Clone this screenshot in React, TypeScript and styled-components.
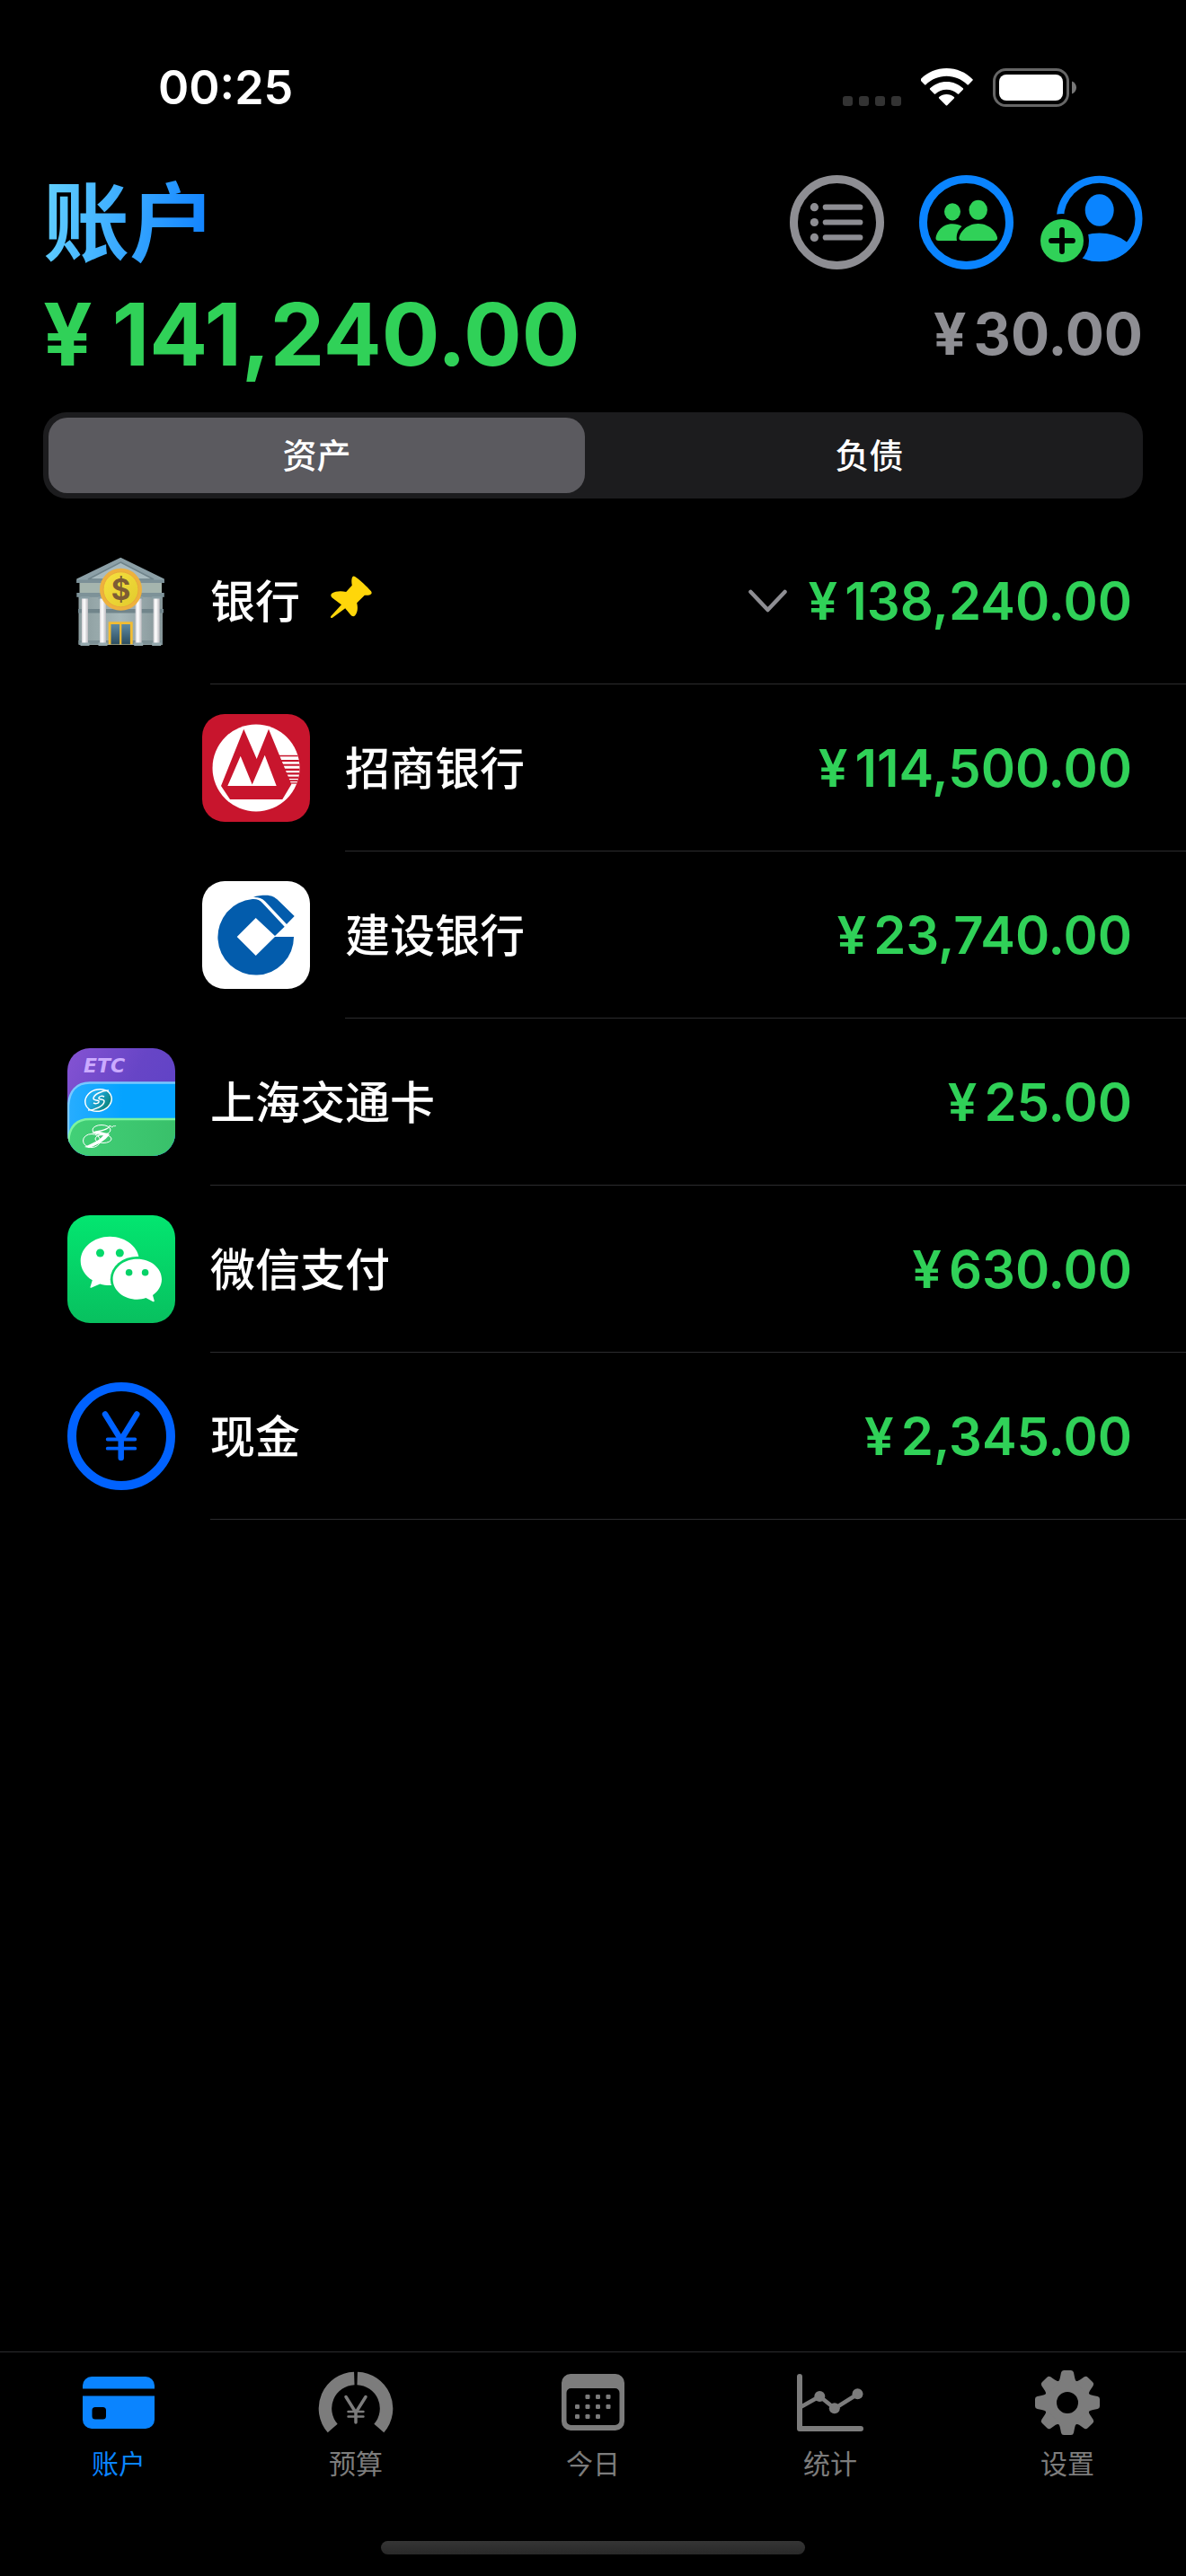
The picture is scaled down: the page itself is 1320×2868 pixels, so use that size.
import React, { useState } from 'react';
import styled, { createGlobalStyle, css } from 'styled-components';

const color = {
  green: '#30d158',
  blue: '#0a84ff',
  grey: '#8e8e93',
  tab: '#7c7c7c',
  line: '#2c2c2e',
};

const GlobalStyle = createGlobalStyle`
  *, *::before, *::after { box-sizing: border-box; }
  body {
    margin: 0;
    background: #000;
    color: #fff;
    font-family: Inter, "Noto Sans CJK SC", sans-serif;
  }
  button {
    margin: 0;
    padding: 0;
    border: 0;
    background: none;
    color: inherit;
    font: inherit;
    cursor: pointer;
  }
  svg { display: block; flex: none; }
`;

const Screen = styled.div`
  display: flex;
  flex-direction: column;
  min-height: 100vh;
`;

const StatusBar = styled.div`
  display: flex;
  align-items: center;
  justify-content: space-between;
  height: 195px;
  padding: 0 121px 0 176px;
`;

const Clock = styled.time`
  font-size: 52px;
  line-height: 64px;
  font-weight: 600;
`;

const StatusIcons = styled.div`
  display: flex;
  align-items: flex-end;
  gap: 22px;
`;

const Header = styled.header`
  padding: 0 48px;
`;

const TitleRow = styled.div`
  display: flex;
  align-items: center;
  justify-content: space-between;
  height: 105px;
`;

const Title = styled.h1`
  margin: 0;
  font-size: 96px;
  line-height: 104px;
  font-weight: 700;
  background: linear-gradient(100deg, #64d2ff 0%, #0a7cff 100%);
  background-clip: text;
  -webkit-background-clip: text;
  color: transparent;
`;

const Actions = styled.div`
  display: flex;
  gap: 39px;
`;

const IconButton = styled.button`
  display: block;
`;

const LastAction = styled(IconButton)`
  margin-left: -9px;
`;

const Totals = styled.div`
  display: flex;
  align-items: center;
  justify-content: space-between;
  height: 144px;
`;

const Money = styled.span<{ $size: number; $weight: number; $tone: string; $gap: number }>`
  display: inline-flex;
  align-items: baseline;
  gap: ${(p) => p.$gap}px;
  font-size: ${(p) => p.$size}px;
  line-height: 1;
  font-weight: ${(p) => p.$weight};
  color: ${(p) => p.$tone};
`;

const Segments = styled.div`
  display: grid;
  grid-template-columns: 1fr 1fr;
  gap: 18px;
  height: 96px;
  margin-top: 15px;
  padding: 6px;
  border-radius: 26px;
  background: #1c1c1e;
`;

const Segment = styled.button<{ $active: boolean }>`
  border-radius: 21px;
  font-size: 38px;
  line-height: 48px;
  font-weight: 500;
  ${(p) => p.$active && css`background: #5b5a5f;`}
`;

const AccountList = styled.ul`
  flex: 1;
  margin: 21px 0 0;
  padding: 0;
  list-style: none;
`;

const AccountRow = styled.li<{ $nested: boolean }>`
  display: flex;
  gap: 39px;
  height: 186px;
  padding-left: ${(p) => (p.$nested ? 225 : 75)}px;
`;

const IconCell = styled.div`
  display: flex;
  align-items: center;
`;

const RowBody = styled.div`
  flex: 1;
  display: flex;
  align-items: center;
  gap: 24px;
  padding-right: 60px;
  border-bottom: 1px solid ${color.line};
`;

const AccountName = styled.span`
  display: flex;
  align-items: center;
  gap: 34px;
  margin-right: auto;
  padding-top: 2px;
  font-size: 50px;
  line-height: 60px;
  font-weight: 500;
`;

const PinMark = styled.span`
  padding-bottom: 10px;
`;

const TabBar = styled.nav`
  display: grid;
  grid-template-columns: repeat(5, 1fr);
  height: 211px;
  padding-top: 18px;
  border-top: 1px solid ${color.line};
`;

const Tab = styled.button<{ $active: boolean }>`
  display: flex;
  flex-direction: column;
  align-items: center;
  justify-content: flex-start;
  gap: 10px;
  font-size: 30px;
  line-height: 40px;
  font-weight: 400;
  color: ${(p) => (p.$active ? color.blue : color.tab)};
`;

const HomeIndicator = styled.div`
  width: 472px;
  height: 15px;
  margin: 0 auto 24px;
  border-radius: 8px;
  background: linear-gradient(#353535, #292929);
`;

const SignalDots = () => (
  <svg width="65" height="12" viewBox="0 0 65 12" fill="#333" aria-hidden="true">
    {[0, 18, 36, 54].map((x) => (
      <rect key={x} x={x} y="0" width="11" height="11" rx="3" />
    ))}
  </svg>
);

const WifiIcon = () => (
  <svg width="58" height="43" viewBox="0 0 58 43" fill="#fff" aria-hidden="true">
    <path d="M28.5 0C39.5 0 49.8 4.300 57.500 12.200c.4.400.4 1 0 1.400l-4.600 4.700c-.4.400-1 .4-1.400 0C45.300 12.200 37.200 8.800 28.500 8.800S11.700 12.200 5.500 18.300c-.4.400-1 .4-1.400 0L-.4 13.600c-.4-.4-.4-1 0-1.400C7.200 4.300 17.500 0 28.500 0Z" />
    <path d="M28.500 15c7 0 13.400 2.700 18.400 7.300.4.400.4 1 0 1.400l-4.700 4.700c-.4.400-1 .4-1.400 0-3.300-3-7.600-4.700-12.300-4.700s-9 1.700-12.300 4.700c-.4.400-1 .4-1.400 0l-4.700-4.700c-.4-.4-.4-1 0-1.400C15.100 17.700 21.500 15 28.500 15Z" />
    <path d="M28.500 29c3.200 0 6.100 1.100 8.400 3 .4.300.4 1 0 1.400l-7.700 7.900c-.4.400-1 .4-1.400 0l-7.700-7.900c-.4-.4-.4-1.100 0-1.400 2.300-1.900 5.200-3 8.400-3Z" />
  </svg>
);

const BatteryIcon = () => (
  <svg width="94" height="43" viewBox="0 0 94 43" aria-hidden="true">
    <rect x="1.500" y="1.500" width="82" height="40" rx="13" fill="none" stroke="#666" strokeWidth="3" />
    <rect x="7" y="7" width="71" height="29" rx="8" fill="#fff" />
    <path d="M88 14.500c3 1 5 3.700 5 7s-2 6-5 7Z" fill="#777" />
  </svg>
);

const ListIcon = () => (
  <svg width="105" height="105" viewBox="0 0 105 105" fill={color.grey} aria-hidden="true">
    <circle cx="52.500" cy="52.500" r="48" fill="none" stroke={color.grey} strokeWidth="9" />
    {[35.700, 52.500, 69.400].map((y) => (
      <g key={y}>
        <circle cx="27.400" cy={y} r="4.600" />
        <rect x="36.700" y={y - 3.100} width="44.700" height="6.200" rx="3.100" />
      </g>
    ))}
  </svg>
);

const PeopleIcon = () => (
  <svg width="105" height="105" viewBox="0 0 105 105" fill={color.green} aria-hidden="true">
    <circle cx="52.500" cy="52.500" r="48" fill="none" stroke={color.blue} strokeWidth="9" />
    <ellipse cx="37" cy="40.800" rx="9" ry="9.600" />
    <ellipse cx="65.700" cy="38.700" rx="10.200" ry="11" />
    <path d="M21.500 73c-3 0-3.600-2-2.500-5.500C21.500 59.500 28.500 54.300 37 54.300c4.200 0 7.800 1 10.500 2.700C42.800 61 40.800 67 42 73Z" />
    <path d="M48 73c-3.200 0-4.200-1.800-3.200-4.800C47.500 60 56 54 65.700 54s18.300 6 21 14.200c1 3 0 4.800-3.200 4.800Z" />
  </svg>
);

const AddPersonIcon = () => (
  <svg width="114" height="105" viewBox="0 0 114 105" aria-hidden="true">
    <defs>
      <mask id="badge-cut">
        <rect width="114" height="105" fill="#fff" />
        <circle cx="24" cy="73" r="30" fill="#000" />
      </mask>
      <clipPath id="person-clip">
        <circle cx="65.700" cy="48.500" r="47.500" />
      </clipPath>
    </defs>
    <g mask="url(#badge-cut)" fill={color.blue}>
      <circle cx="65.700" cy="48.500" r="43.800" fill="none" stroke={color.blue} strokeWidth="8" />
      <ellipse cx="65.700" cy="39" rx="16" ry="17.800" />
      <ellipse cx="65.700" cy="95.500" rx="41" ry="31" clipPath="url(#person-clip)" />
    </g>
    <circle cx="24" cy="73" r="24" fill={color.green} />
    <path d="M24 61v24M12 73h24" stroke="#000" strokeWidth="5.800" strokeLinecap="round" />
  </svg>
);

const BankIcon = () => (
  <svg width="120" height="120" viewBox="0 0 120 120" role="img" aria-label="银行">
    <defs>
      <linearGradient id="wall" x1="0" x2="1" y1="0" y2="0">
        <stop offset="0" stopColor="#8b9c9e" />
        <stop offset="0.500" stopColor="#a7b8ba" />
        <stop offset="1" stopColor="#859598" />
      </linearGradient>
      <linearGradient id="column" x1="0" x2="1" y1="0" y2="0">
        <stop offset="0" stopColor="#d4d2d6" />
        <stop offset="0.400" stopColor="#fff" />
        <stop offset="1" stopColor="#bcbbc0" />
      </linearGradient>
      <linearGradient id="glass" x1="0" x2="0" y1="0" y2="1">
        <stop offset="0" stopColor="#5f8aa3" />
        <stop offset="1" stopColor="#2b4c5e" />
      </linearGradient>
      <linearGradient id="coin" x1="0" x2="1" y1="0" y2="1">
        <stop offset="0" stopColor="#f6e13f" />
        <stop offset="1" stopColor="#e2ca2c" />
      </linearGradient>
    </defs>
    <rect x="12.500" y="54" width="93.500" height="55" fill="url(#wall)" />
    <rect x="12" y="69" width="95" height="4.500" fill="#71858b" />
    <rect x="12.500" y="104" width="93.500" height="4" fill="#7c8f94" />
    <rect x="13.500" y="39" width="91.500" height="13" fill="#a5b5ae" />
    <rect x="10.300" y="51" width="97.500" height="4.800" fill="#7d9298" />
    <path d="M59.300 11.700 107.800 35.500v4.500H10.300v-4.500Z" fill="#8ca0a7" />
    <path d="M59.300 17 96 36H23Z" fill="#a9bbbf" stroke="#6f848b" strokeWidth="1.500" />
    <rect x="10.300" y="36.500" width="97.500" height="3.500" fill="#7b9097" />
    {[16, 36, 75.700, 95.700].map((x) => (
      <g key={x}>
        <rect x={x - 1.500} y="55" width="10" height="3" fill="#899ea4" />
        <rect x={x} y="57.500" width="7" height="49.500" fill="url(#column)" />
        <rect x={x - 1.500} y="106.500" width="10" height="3.500" fill="#94a8ad" />
      </g>
    ))}
    <rect x="45.700" y="83.300" width="27" height="25" fill="#f3bd31" />
    <rect x="48.500" y="86" width="9.600" height="22.300" fill="url(#glass)" />
    <rect x="60.300" y="86" width="9.600" height="22.300" fill="url(#glass)" />
    <circle cx="59.500" cy="47.300" r="23.500" fill="#eeb13d" />
    <circle cx="59.500" cy="47.300" r="19.500" fill="url(#coin)" stroke="#e8a93a" strokeWidth="1" />
    <text x="59.500" y="59" textAnchor="middle" fontFamily="Inter, sans-serif" fontWeight="700" fontSize="33" fill="#7d5c35">$</text>
  </svg>
);

const PinIcon = () => (
  <svg width="46" height="47" viewBox="0 0 46 47" fill="#ffd60a" role="img" aria-label="置顶">
    <path d="M27.500 1.200C33 5 40 11.500 44.800 17c2.800 3.600-1.800 5.200-7 4.800l-8.600 8.400c1.500 6 .6 11.200-2 14-1.600 1.700-3.400 1.200-5-.7l-6-7.300L2 46.800c-1.300.9-2.600-.5-1.700-1.800L12 32.200 2 24.700c-2-1.700-2.400-3.600-.4-5.100 4-2.800 10.500-3 15.600-1.600l6.600-7.300c-.8-3.700-.6-7.700.4-9.300.7-1.200 2-1.200 3.300-.2Z" />
  </svg>
);

const CmbIcon = () => (
  <svg width="120" height="120" viewBox="0 0 120 120" role="img" aria-label="招商银行">
    <defs>
      <clipPath id="cmb-disc">
        <circle cx="60" cy="60" r="48.500" />
      </clipPath>
    </defs>
    <rect width="120" height="120" rx="25" fill="#c8152d" />
    <circle cx="60" cy="60" r="48.500" fill="#fff" />
    <g clipPath="url(#cmb-disc)" fill="#c8152d">
      <rect x="85" y="45.800" width="26" height="1.500" />
      <rect x="85" y="51" width="26" height="2" />
      <rect x="85" y="55.700" width="26" height="2" />
      <rect x="85" y="60.700" width="26" height="2.300" />
      <rect x="85" y="65.200" width="26" height="2.300" />
      <rect x="85" y="69.600" width="26" height="2.300" />
      <rect x="90" y="73.300" width="21" height="1.700" />
      <rect x="90" y="76.300" width="21" height="1.300" />
    </g>
    <path d="M46.300 16.700 60.700 50 74 16.700 99.300 78.300 89.300 95H31L21 80Z" fill="#c8152d" />
    <path d="M28.300 80 42.700 46.700 55.700 78.500 69.700 45.700 82.700 80Z" fill="#fff" />
  </svg>
);

const CcbIcon = () => (
  <svg width="120" height="120" viewBox="0 0 120 120" role="img" aria-label="建设银行">
    <rect width="120" height="120" rx="25" fill="#fff" />
    <g fill="#035cac">
      <path d="M102 62A42.300 42.300 0 1 1 56 20.100c5-.3 8 1 11 4.100l24.700 26.500L81 61 59.700 41 38.700 62 59.700 83 81 62Z" />
      <path d="M57 18C61 16 66 15.700 71 15.700c6 0 10 2 14 6L102.700 39 94 48 70 22.500C66 18.500 62 17.700 57 18Z" />
    </g>
  </svg>
);

const TransitIcon = () => (
  <svg width="120" height="120" viewBox="0 0 120 120" role="img" aria-label="上海交通卡">
    <defs>
      <clipPath id="transit-tile">
        <rect width="120" height="120" rx="25" />
      </clipPath>
      <linearGradient id="purple" x1="0" x2="1" y1="0" y2="0.500">
        <stop offset="0" stopColor="#8553d3" />
        <stop offset="0.600" stopColor="#6745c6" />
        <stop offset="1" stopColor="#6043c6" />
      </linearGradient>
      <linearGradient id="azure" x1="0" x2="1" y1="0" y2="0">
        <stop offset="0" stopColor="#27adff" />
        <stop offset="0.500" stopColor="#05a3ff" />
      </linearGradient>
      <linearGradient id="leaf" x1="0" x2="1" y1="0" y2="0">
        <stop offset="0" stopColor="#42d077" />
        <stop offset="1" stopColor="#39c06a" />
      </linearGradient>
      <linearGradient id="globe" x1="0" x2="1" y1="0" y2="1">
        <stop offset="0.300" stopColor="#20aef0" />
        <stop offset="1" stopColor="#06795c" />
      </linearGradient>
    </defs>
    <g clipPath="url(#transit-tile)">
      <rect width="120" height="120" fill="url(#purple)" />
      <text x="18" y="27" fontFamily="DejaVu Sans, sans-serif" fontStyle="italic" fontWeight="700" fontSize="22" fill="#cbaaff">ETC</text>
      <path d="M1 64C2 48 10 38.500 25 38.500H122V124H1Z" fill="url(#azure)" stroke="#79c8ff" strokeWidth="2.500" />
      <path d="M1 104C2 88 10 79 25 79H122V124H1Z" fill="url(#leaf)" stroke="#7df3a0" strokeWidth="2.500" />
      <g transform="rotate(-18 34.500 58)">
        <ellipse cx="34.500" cy="58" rx="15" ry="12" fill="url(#globe)" stroke="#fff" strokeWidth="1.500" />
      </g>
      <path d="M46 47c-8 0-17 5-17 9 0 3 7 1 6 4-1 2-4 2-6 1M23 69c8 0 18-5 18-10 0-3-7-1-6-4 1-2 4-2 6-1" fill="none" stroke="#fff" strokeWidth="1.500" />
      <g fill="none" stroke="#fff" strokeWidth="1">
        <ellipse cx="38" cy="91" rx="10" ry="5.500" />
        <ellipse cx="27" cy="103" rx="9.500" ry="7.500" />
        <ellipse cx="40" cy="101" rx="9" ry="4.500" />
        <path d="M46 87c2-2 4 2 4 1 1-3 3 0 4-2" />
      </g>
      <path d="M49 86c-8 6-16 5-22 8 4 2 10 1 13 3-4 6-13 9-21 13l5 1c9-3 18-8 23-15-3-2-8-2-11-3 5-1 10-3 13-7Z" fill="#fff" />
    </g>
  </svg>
);

const WechatIcon = () => (
  <svg width="120" height="120" viewBox="0 0 120 120" role="img" aria-label="微信支付">
    <defs>
      <linearGradient id="wechat" gradientUnits="userSpaceOnUse" x1="0" x2="0" y1="0" y2="120">
        <stop offset="0" stopColor="#03e670" />
        <stop offset="1" stopColor="#08c05f" />
      </linearGradient>
    </defs>
    <rect width="120" height="120" rx="25" fill="url(#wechat)" />
    <path d="M47.300 23.700c18.200 0 32.700 12.200 32.700 27.200S65.500 78 47.300 78c-3.900 0-7.600-.5-11-1.500L26.500 80.700c-.8.300-1.300-.2-1-1l2.300-7.400C19.800 67.300 14.700 59.600 14.700 50.900c0-15 14.500-27.200 32.600-27.200Z" fill="#fff" />
    <g fill="url(#wechat)">
      <circle cx="36.500" cy="42" r="4.500" />
      <circle cx="58.300" cy="42" r="4.500" />
      <ellipse cx="77.800" cy="71.200" rx="30" ry="25.300" />
    </g>
    <path d="M77.800 48.700c15 0 27.200 10 27.200 22.500 0 7.300-4 13.500-10 17.700l1.700 6.200c.2.900-.5 1.500-1.300 1.100l-8-4.100c-3 1-6.200 1.600-9.600 1.600-15 0-27.200-10-27.200-22.500s12.200-22.500 27.200-22.500Z" fill="#fff" />
    <g fill="url(#wechat)">
      <circle cx="68.600" cy="63.700" r="3.800" />
      <circle cx="86.600" cy="63.700" r="3.800" />
    </g>
  </svg>
);

const CashIcon = () => (
  <svg width="120" height="120" viewBox="0 0 120 120" fill="none" stroke="#0062ff" strokeLinecap="round" role="img" aria-label="现金">
    <circle cx="60" cy="60" r="55" strokeWidth="10" />
    <path d="M42 35.500 59.700 64 77.300 35.500M59.700 63v21" strokeWidth="6.500" strokeLinejoin="round" />
    <path d="M44.700 63.500h30.600M44.700 73.700h30.600" strokeWidth="3.800" />
  </svg>
);

const ChevronDown = () => (
  <svg width="43" height="26" viewBox="0 0 43 26" fill="none" stroke={color.grey} strokeWidth="4.500" strokeLinecap="round" strokeLinejoin="round" aria-hidden="true">
    <path d="M2.500 3 21.500 23 40.500 3" />
  </svg>
);

const tabIconProps = { width: 84, height: 76, viewBox: '0 0 84 76', 'aria-hidden': true } as const;

const CardTabIcon = () => (
  <svg {...tabIconProps} fill="currentColor">
    <path d="M2 22.500V19a10 10 0 0 1 10-10h60a10 10 0 0 1 10 10v3.500Z" />
    <path
      fillRule="evenodd"
      d="M2 30.500h80v26.500a10 10 0 0 1-10 10H12A10 10 0 0 1 2 57ZM16 43a3.500 3.500 0 0 0-3.500 3.500v6.500a3.500 3.500 0 0 0 3.500 3.500h8.500a3.500 3.500 0 0 0 3.500-3.500v-6.500a3.500 3.500 0 0 0-3.500-3.500Z"
    />
  </svg>
);

const BudgetTabIcon = () => (
  <svg {...tabIconProps} fill="none" stroke="currentColor">
    <path d="M40.300 11A33.500 33.500 0 0 0 16.200 66.500M43.700 11A33.500 33.500 0 0 1 67.800 66.500" strokeWidth="14.500" />
    <path d="M31 31.500 42 49 53 31.500M42 48v12" strokeWidth="3.500" strokeLinecap="round" strokeLinejoin="round" />
    <path d="M33.500 48h17M33.500 53.500h17" strokeWidth="2.400" strokeLinecap="round" />
  </svg>
);

const calendarDots = [
  [36, 31.500], [47.500, 31.500], [59, 31.500],
  [24.500, 42.500], [36, 42.500], [47.500, 42.500], [59, 42.500],
  [24.500, 53.500], [36, 53.500], [47.500, 53.500],
];

const TodayTabIcon = () => (
  <svg {...tabIconProps} fill="currentColor">
    <path
      fillRule="evenodd"
      d="M17 6h50a10 10 0 0 1 10 10v43a10 10 0 0 1-10 10H17A10 10 0 0 1 7 59V16A10 10 0 0 1 17 6ZM17.500 22a5 5 0 0 0-5 5v31a5 5 0 0 0 5 5h49a5 5 0 0 0 5-5V27a5 5 0 0 0-5-5Z"
    />
    {calendarDots.map(([x, y]) => (
      <rect key={`${x}-${y}`} x={x - 2.500} y={y - 2.500} width="5" height="5" rx="1.200" />
    ))}
  </svg>
);

const StatsTabIcon = () => (
  <svg {...tabIconProps} fill="none" stroke="currentColor">
    <path d="M8 9v58h68" strokeWidth="6" strokeLinecap="round" strokeLinejoin="round" />
    <path d="M9 43 30.300 31 47 44.500 72.500 28.500" strokeWidth="4.500" />
    <g fill="currentColor" stroke="none">
      <circle cx="30.300" cy="31" r="6" />
      <circle cx="46.800" cy="44.200" r="6" />
      <circle cx="72.500" cy="28.300" r="6" />
    </g>
  </svg>
);

const SettingsTabIcon = () => (
  <svg {...tabIconProps} fill="currentColor">
    <g transform="translate(42 38)">
      <circle r="19" fill="none" stroke="currentColor" strokeWidth="14" />
      {[0, 45, 90, 135, 180, 225, 270, 315].map((a) => (
        <path
          key={a}
          transform={`rotate(${a})`}
          d="M-11.500-22C-9-24-8.500-26-8-28.500L-7-33.500Q-6.500-36-4-36H4Q6.500-36 7-33.500L8-28.500C8.500-26 9-24 11.500-22Z"
        />
      ))}
    </g>
  </svg>
);

interface AmountProps {
  value: string;
  size?: number;
  weight?: number;
  tone?: string;
  gap?: number;
}

const Amount = ({ value, size = 58, weight = 600, tone = color.green, gap = 8 }: AmountProps) => (
  <Money $size={size} $weight={weight} $tone={tone} $gap={gap}>
    <span>¥</span>
    <span>{value}</span>
  </Money>
);

const accounts = [
  { name: '银行', value: '138,240.00', Icon: BankIcon, nested: false, pinned: true },
  { name: '招商银行', value: '114,500.00', Icon: CmbIcon, nested: true, pinned: false },
  { name: '建设银行', value: '23,740.00', Icon: CcbIcon, nested: true, pinned: false },
  { name: '上海交通卡', value: '25.00', Icon: TransitIcon, nested: false, pinned: false },
  { name: '微信支付', value: '630.00', Icon: WechatIcon, nested: false, pinned: false },
  { name: '现金', value: '2,345.00', Icon: CashIcon, nested: false, pinned: false },
];

const tabs = [
  { label: '账户', Icon: CardTabIcon },
  { label: '预算', Icon: BudgetTabIcon },
  { label: '今日', Icon: TodayTabIcon },
  { label: '统计', Icon: StatsTabIcon },
  { label: '设置', Icon: SettingsTabIcon },
];

export default function App() {
  const [segment, setSegment] = useState('资产');
  const [tab, setTab] = useState('账户');

  return (
    <Screen lang="zh-CN">
      <GlobalStyle />
      <StatusBar>
        <Clock>00:25</Clock>
        <StatusIcons>
          <SignalDots />
          <WifiIcon />
          <BatteryIcon />
        </StatusIcons>
      </StatusBar>
      <Header>
        <TitleRow>
          <Title>账户</Title>
          <Actions>
            <IconButton type="button" aria-label="列表"><ListIcon /></IconButton>
            <IconButton type="button" aria-label="成员"><PeopleIcon /></IconButton>
            <LastAction type="button" aria-label="添加账户"><AddPersonIcon /></LastAction>
          </Actions>
        </TitleRow>
        <Totals>
          <Amount value="141,240.00" size={96} weight={700} gap={22} />
          <Amount value="30.00" size={64} weight={700} tone={color.grey} gap={8} />
        </Totals>
        <Segments role="group" aria-label="类型">
          {['资产', '负债'].map((s) => (
            <Segment key={s} type="button" $active={s === segment} aria-pressed={s === segment} onClick={() => setSegment(s)}>
              {s}
            </Segment>
          ))}
        </Segments>
      </Header>
      <AccountList>
        {accounts.map(({ name, value, Icon, nested, pinned }) => (
          <AccountRow key={name} $nested={nested}>
            <IconCell><Icon /></IconCell>
            <RowBody>
              <AccountName>
                {name}
                {pinned && <PinMark><PinIcon /></PinMark>}
              </AccountName>
              {pinned && (
                <IconButton type="button" aria-label="收起"><ChevronDown /></IconButton>
              )}
              <Amount value={value} />
            </RowBody>
          </AccountRow>
        ))}
      </AccountList>
      <TabBar>
        {tabs.map(({ label, Icon }) => (
          <Tab key={label} type="button" $active={label === tab} aria-current={label === tab ? 'page' : undefined} onClick={() => setTab(label)}>
            <Icon />
            {label}
          </Tab>
        ))}
      </TabBar>
      <HomeIndicator />
    </Screen>
  );
}
